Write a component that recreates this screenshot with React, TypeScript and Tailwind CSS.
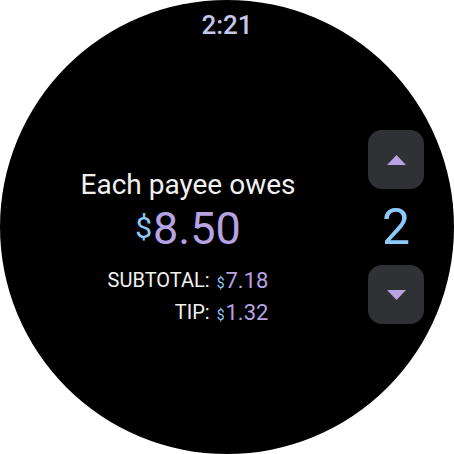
import { useState } from 'react';

const Arrow = ({ up }: { up: boolean }) => (
    <svg width="19" height="10" viewBox="0 0 19 10">
        <polygon points={up ? '9.5,0 19,10 0,10' : '0,0 19,0 9.5,10'} fill="#b7a3e3" />
    </svg>
);

export default function App() {
    const [payees, setPayees] = useState(2);
    const subtotal = 7.18 * 2;
    const tip = 1.32 * 2;
    const each = (subtotal + tip) / payees;

    return (
        <div className="w-[454px] h-[454px] bg-white" style={{ fontFamily: 'Roboto, "Noto Sans", sans-serif' }}>
            <div className="w-[454px] h-[454px] rounded-full bg-black flex flex-col overflow-hidden">
                <div className="pt-[10px] text-center text-[26px] leading-[30px] font-medium text-[#c4c6ec]">2:21</div>

                <div className="flex items-start mt-[90px] pl-[60px]">
                    <div className="w-[256px] mt-[39px] flex flex-col items-center">
                        <div className="text-[28px] leading-[32px] text-[#f1f1f1]">Each payee owes</div>
                        <div className="mt-[2px] flex items-center text-[#b7a3e3]">
                            <span className="text-[30px] leading-[52px] text-[#8cc8f8] mr-[1px] -mt-[2px]">$</span>
                            <span className="text-[45px] leading-[52px]">{each.toFixed(2)}</span>
                        </div>
                        <div className="mt-[11px] grid grid-cols-[auto_auto] gap-x-[7px] text-[20px] leading-[29px]">
                            <span className="text-right text-[#f1f1f1]">SUBTOTAL:</span>
                            <span className="text-[#b7a3e3] text-[22px]">
                                <span className="text-[14px] text-[#8cc8f8] mr-[1px]">$</span>{(subtotal / payees).toFixed(2)}
                            </span>
                            <span className="text-right text-[#f1f1f1]">TIP:</span>
                            <span className="text-[#b7a3e3] text-[22px]">
                                <span className="text-[14px] text-[#8cc8f8] mr-[1px]">$</span>{(tip / payees).toFixed(2)}
                            </span>
                        </div>
                    </div>

                    <div className="ml-[52px] w-[56px] flex flex-col items-center">
                        <button
                            onClick={() => setPayees(p => p + 1)}
                            className="w-[56px] h-[59px] rounded-[14px] bg-[#303134] flex items-center justify-center"
                        >
                            <Arrow up />
                        </button>
                        <div className="text-[50px] leading-[76px] text-[#8cc8f8]">{payees}</div>
                        <button
                            onClick={() => setPayees(p => Math.max(1, p - 1))}
                            className="w-[56px] h-[59px] rounded-[14px] bg-[#303134] flex items-center justify-center"
                        >
                            <Arrow up={false} />
                        </button>
                    </div>
                </div>
            </div>
        </div>
    );
}
